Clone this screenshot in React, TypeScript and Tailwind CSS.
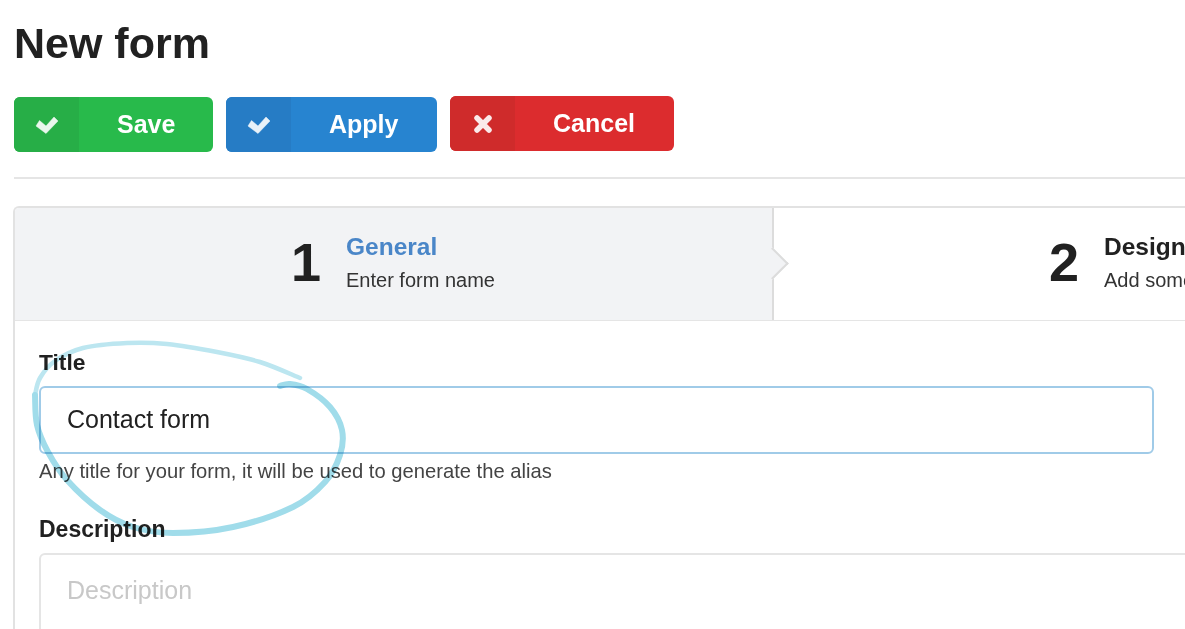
import { ReactNode } from "react";

const CheckIcon = () => (
  <svg width="24" height="18" viewBox="0 0 24 18" className="opacity-90">
    <path d="M1 10L4.5 4.5L11 10L19 1L23 5L11 17.5Z" fill="white" stroke="white" strokeWidth="0.5" strokeLinejoin="round" />
  </svg>
);

const TimesIcon = () => (
  <svg width="18" height="18" viewBox="0 0 18 18" fill="none" className="opacity-90">
    <path d="M3 3L15 15M15 3L3 15" stroke="white" strokeWidth="5.5" strokeLinecap="round" />
  </svg>
);

// smooth line through the hand traced points of the pencil mark
const smooth = (pts: number[][]) => {
  let d = `M${pts[0][0]} ${pts[0][1]}`;
  for (let i = 0; i < pts.length - 1; i++) {
    const p0 = pts[Math.max(i - 1, 0)];
    const p1 = pts[i];
    const p2 = pts[i + 1];
    const p3 = pts[Math.min(i + 2, pts.length - 1)];
    d += `C${p1[0] + (p2[0] - p0[0]) / 6} ${p1[1] + (p2[1] - p0[1]) / 6} ${p2[0] - (p3[0] - p1[0]) / 6} ${p2[1] - (p3[1] - p1[1]) / 6} ${p2[0]} ${p2[1]}`;
  }
  return d;
};

const topStroke = [[300, 378], [260, 362], [217, 352], [167, 344], [127, 343], [83, 348], [55, 361], [40, 378], [35, 395]];
const bottomStroke = [[35, 395], [37, 425], [48, 452], [67, 480], [100, 510], [133, 527], [173, 533], [233, 527], [293, 507], [325, 482], [340, 455], [342, 430], [330, 407], [307, 389], [290, 384], [280, 386]];

interface ActionButtonProps {
  icon: ReactNode;
  label: string;
  className: string;
  iconClassName: string;
}
const ActionButton = (props: ActionButtonProps) => {
  const { icon, label, className, iconClassName } = props;
  return (
    <button type="button" className={`flex h-[55px] overflow-hidden rounded-[6px] text-white ${className}`}>
      <span className={`flex h-full w-[65px] shrink-0 items-center justify-center ${iconClassName}`}>{icon}</span>
      <span className="pl-[38px] text-[25px] leading-[54px] font-bold">{label}</span>
    </button>
  );
};

interface StepProps {
  num: string;
  title: string;
  text: string;
  active?: boolean;
}
const Step = ({ num, title, text, active }: StepProps) => (
  <div
    className={`relative flex h-[112px] w-[759px] shrink-0 pt-[24px] ${
      active ? "border-r-2 border-[#dcdcdc] bg-[#f2f3f5] pl-[276px]" : "pl-[275px]"
    }`}
  >
    <div className="w-[55px] text-[54px] leading-[61px] font-bold text-[#212121]">{num}</div>
    <div>
      <div className={`text-[24.5px] leading-[30px] font-bold ${active ? "text-[#4a86c8]" : "text-[#212121]"}`}>{title}</div>
      <div className="mt-[5px] text-[20px] leading-[26px] whitespace-nowrap text-[#333]">{text}</div>
    </div>
    {active && (
      <div className="absolute top-[44px] right-[-12px] z-10 h-[23px] w-[23px] rotate-45 border-t-2 border-r-2 border-[#dcdcdc] bg-[#f2f3f5]" />
    )}
  </div>
);

export default function App() {
  return (
    <div className="relative h-[629px] w-[1185px] overflow-hidden bg-white pl-[14px] font-['Liberation_Sans',Arial,sans-serif] text-[#212121]">
      <h1 className="pt-[17px] text-[43px] leading-[52px] font-bold">New form</h1>
      <div className="mt-[28px] flex items-start gap-[13px]">
        <ActionButton icon={<CheckIcon />} label="Save" className="w-[199px] bg-[#28ba4b]" iconClassName="bg-[#27ae47]" />
        <ActionButton icon={<CheckIcon />} label="Apply" className="w-[211px] bg-[#2784d0]" iconClassName="bg-[#267cc5]" />
        <ActionButton icon={<TimesIcon />} label="Cancel" className="mt-[-1px] w-[224px] bg-[#dc2c2e]" iconClassName="bg-[#cf2b2b]" />
      </div>
      <div className="mt-[25px] h-[2px] bg-[#e5e5e5]" />

      <div className="mt-[27px] ml-[-1px] w-[1600px] rounded-t-[6px] border-2 border-r-0 border-b-0 border-[#e2e2e2]">
        <div className="flex overflow-hidden rounded-tl-[4px] border-b border-[#e5e5e5]">
          <Step num="1" title="General" text="Enter form name" active />
          <Step num="2" title="Design" text="Add some fields" />
        </div>
        <div className="pt-[27px] pl-[24px]">
          <label className="block text-[22.8px] leading-[28px] font-bold">Title</label>
          <div className="mt-[10px] flex h-[68px] w-[1115px] items-center rounded-[6px] border-2 border-[#a0cbe8] pl-[26px] text-[25px]">
            Contact form
          </div>
          <p className="mt-[4px] text-[20.2px] leading-[26px] text-[#444]">Any title for your form, it will be used to generate the alias</p>
          <label className="mt-[31px] block text-[23px] leading-[28px] font-bold">Description</label>
          <div className="mt-[10px] h-[120px] rounded-[6px] border-2 border-[#e5e5e5] pt-[19px] pl-[26px] text-[25px] leading-[32px] text-[#c8c8c8]">
            Description
          </div>
        </div>
      </div>

      <svg className="pointer-events-none absolute top-0 left-0 mix-blend-multiply blur-[0.7px]" width="1185" height="629" viewBox="0 0 1185 629" fill="none">
        <path d={smooth(topStroke)} stroke="#bce6f0" strokeWidth="4.5" strokeLinecap="round" />
        <path d={smooth(bottomStroke)} stroke="#a0dcea" strokeWidth="6" strokeLinecap="round" />
      </svg>
    </div>
  );
}
